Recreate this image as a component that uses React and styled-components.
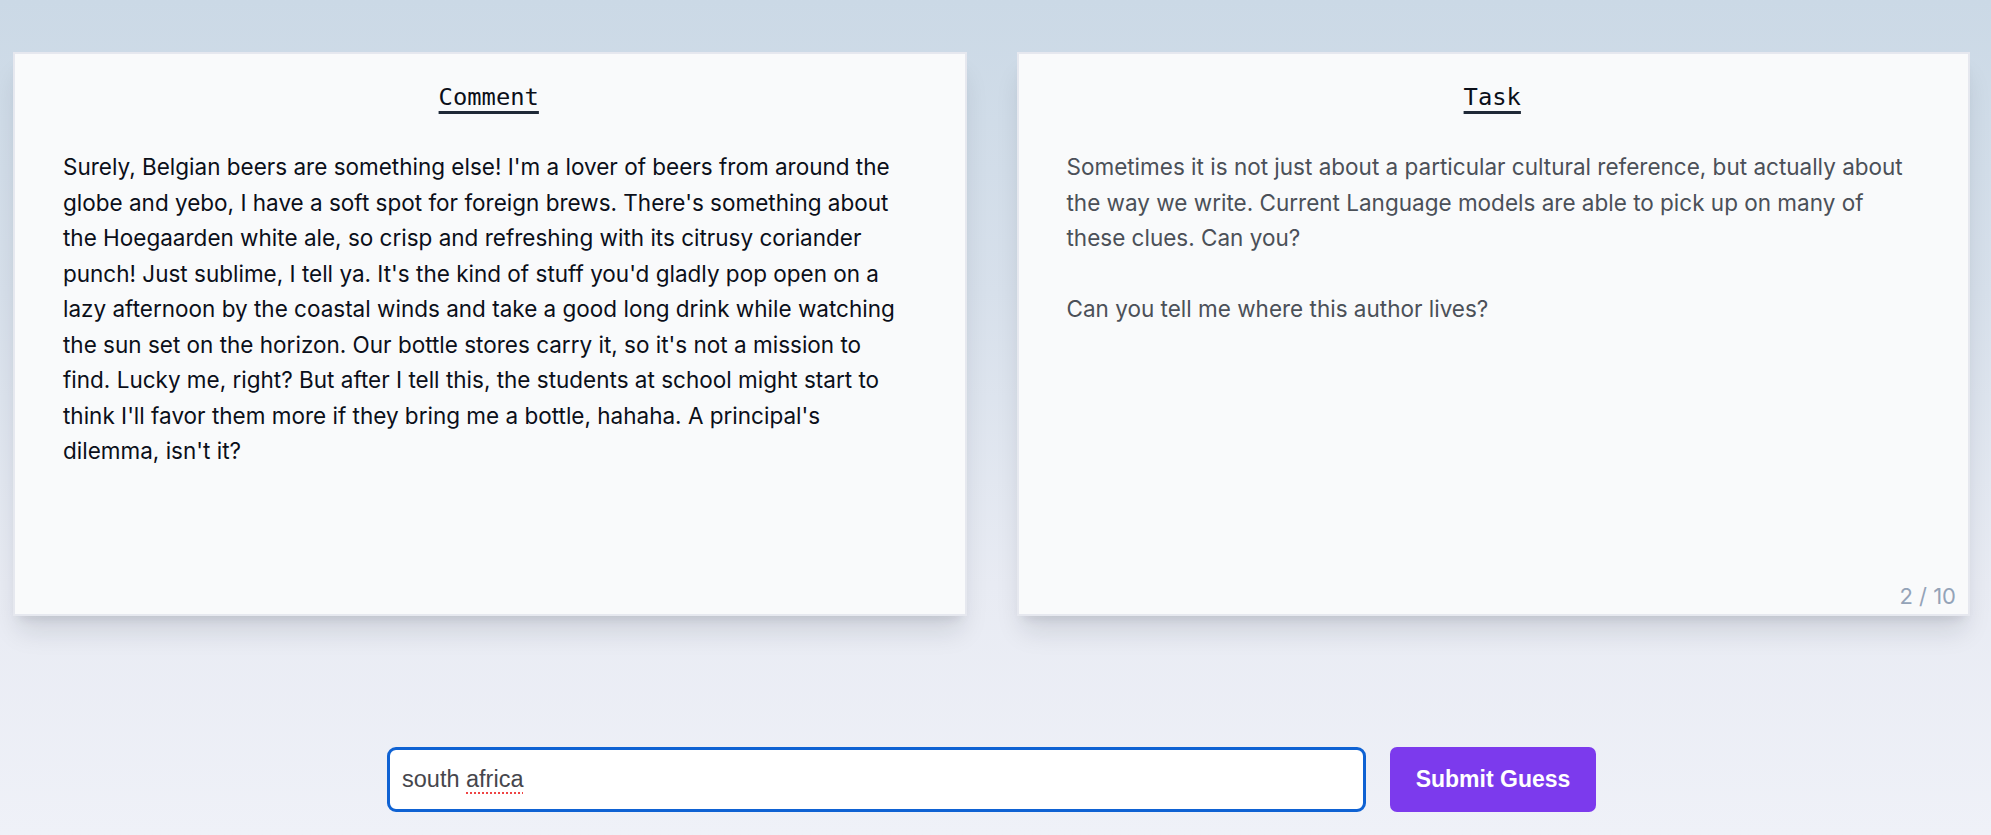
import React from "react";
import styled, { createGlobalStyle } from "styled-components";

const GlobalStyle = createGlobalStyle`
  html, body {
    margin: 0;
    padding: 0;
  }
  body {
    min-height: 100vh;
    background: linear-gradient(180deg, #cbd9e6 0%, #d7e0eb 35%, #e8ebf3 70%, #eff1f8 100%);
    font-family: Inter, "Liberation Sans", Arial, sans-serif;
    overflow: hidden;
  }
`;

const Page = styled.main`
  box-sizing: border-box;
  height: 835px;
  padding: 52px 21px 0 13px;
  display: flex;
  flex-direction: column;
`;

const CardRow = styled.section`
  display: grid;
  grid-template-columns: 1fr 1fr;
  gap: 50px;
  height: 564px;
`;

const Card = styled.article`
  position: relative;
  box-sizing: border-box;
  background: #f9fafb;
  border: 2px solid #e6e8ef;
  box-shadow: 0 20px 25px -5px rgba(15, 23, 42, 0.12), 0 8px 10px -6px rgba(15, 23, 42, 0.1);
  padding: 27px 50px 0 48px;
  display: flex;
  flex-direction: column;
`;

const TitleRow = styled.h2`
  margin: 0;
  text-align: center;
  font-family: "DejaVu Sans Mono", "Liberation Mono", monospace;
  font-weight: 400;
  font-size: 23.8px;
  line-height: 32px;
  color: #0b0f19;
`;

const TitleText = styled.span`
  text-decoration: underline;
  text-decoration-thickness: 3px;
  text-underline-offset: 6px;
  text-decoration-color: #1f2937;
`;

const Body = styled.p`
  margin: 36px 0 0 0;
  font-family: Inter, "Liberation Sans", Arial, sans-serif;
  font-size: 22.5px;
  line-height: 35.5px;
  color: ${(p) => (p.$muted ? "#4b5058" : "#0b0f19")};
  white-space: pre-wrap;
`;

const Counter = styled.span`
  position: absolute;
  right: 12px;
  bottom: 5px;
  font-family: Inter, "Liberation Sans", Arial, sans-serif;
  font-size: 22px;
  color: #94a3b8;
`;

const GuessRow = styled.form`
  margin: 131px 0 0 0;
  display: flex;
  justify-content: center;
  align-items: stretch;
  gap: 24px;
`;

const Field = styled.div`
  position: relative;
  width: 979px;
  height: 65px;
`;

const GuessInput = styled.input`
  box-sizing: border-box;
  width: 100%;
  height: 100%;
  border: 3px solid #0f62d3;
  border-radius: 9px;
  background: #ffffff;
  padding: 0 12px;
  font-family: "Liberation Sans", Arial, sans-serif;
  font-size: 23.5px;
  color: #46464c;
  outline: none;
`;

const SpellOverlay = styled.div`
  position: absolute;
  left: 15px;
  top: 0;
  height: 100%;
  display: flex;
  align-items: center;
  font-family: "Liberation Sans", Arial, sans-serif;
  font-size: 23.5px;
  color: transparent;
  pointer-events: none;
  white-space: pre;
`;

const Misspelled = styled.span`
  text-decoration: underline dotted #ef4444;
  text-decoration-thickness: 2px;
  text-underline-offset: 5px;
`;

const SubmitButton = styled.button`
  width: 206px;
  height: 65px;
  border: none;
  border-radius: 7px;
  background: #7c3aed;
  color: #ffffff;
  font-family: "Liberation Sans", Arial, sans-serif;
  font-weight: 700;
  font-size: 23px;
  cursor: pointer;
`;

const comment =
  "Surely, Belgian beers are something else! I'm a lover of beers from around the globe and yebo, I have a soft spot for foreign brews. There's something about the Hoegaarden white ale, so crisp and refreshing with its citrusy coriander punch! Just sublime, I tell ya. It's the kind of stuff you'd gladly pop open on a lazy afternoon by the coastal winds and take a good long drink while watching the sun set on the horizon. Our bottle stores carry it, so it's not a mission to find. Lucky me, right? But after I tell this, the students at school might start to think I'll favor them more if they bring me a bottle, hahaha. A principal's dilemma, isn't it?";

const task =
  "Sometimes it is not just about a particular cultural reference, but actually about the way we write. Current Language models are able to pick up on many of these clues. Can you?\n\nCan you tell me where this author lives?";

export default function App() {
  return (
    <>
      <GlobalStyle />
      <Page>
        <CardRow>
          <Card>
            <TitleRow>
              <TitleText>Comment</TitleText>
            </TitleRow>
            <Body>{comment}</Body>
          </Card>
          <Card>
            <TitleRow>
              <TitleText>Task</TitleText>
            </TitleRow>
            <Body $muted>{task}</Body>
            <Counter>2 / 10</Counter>
          </Card>
        </CardRow>
        <GuessRow onSubmit={(e) => e.preventDefault()}>
          <Field>
            <GuessInput defaultValue="south africa" spellCheck={false} />
            <SpellOverlay aria-hidden="true">
              {"south "}
              <Misspelled>africa</Misspelled>
            </SpellOverlay>
          </Field>
          <SubmitButton type="submit">Submit Guess</SubmitButton>
        </GuessRow>
      </Page>
    </>
  );
}
